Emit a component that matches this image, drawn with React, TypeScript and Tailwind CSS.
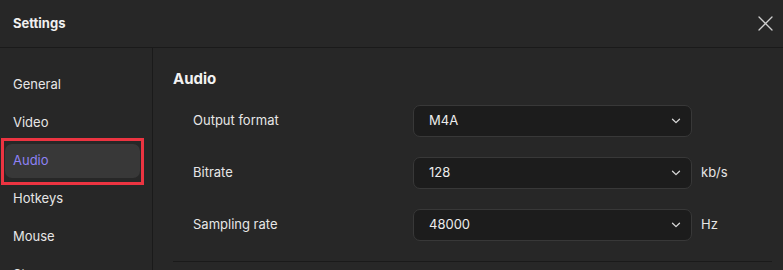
import { useState } from 'react'

const navItems = ['General', 'Video', 'Audio', 'Hotkeys', 'Mouse', 'Storage']

interface SelectRowProps {
  label: string
  value: string
  unit?: string
}

function Chevron() {
  return (
    <svg width="10" height="6" viewBox="0 0 10 6" fill="none">
      <path d="M1.5 1.2 L5 4.6 L8.5 1.2" stroke="#d8d8d8" strokeWidth="1.3" strokeLinecap="round" strokeLinejoin="round" />
    </svg>
  )
}

function SelectRow({ label, value, unit }: SelectRowProps) {
  return (
    <div className="flex items-center h-[32px]">
      <span className="w-[240px] pl-[20px] text-[13px] text-[#e6e6e6]">{label}</span>
      <div className="flex items-center justify-between w-[279px] h-[32px] pl-[15px] pr-[10px] rounded-[7px] bg-[#1c1c1c] border border-[#383838]">
        <span className="text-[13px] text-[#ececec]">{value}</span>
        <Chevron />
      </div>
      {unit && <span className="ml-[9px] text-[13px] text-[#e6e6e6]">{unit}</span>}
    </div>
  )
}

export default function App() {
  const [active, setActive] = useState('Audio')

  return (
    <div className="w-[783px] h-[270px] overflow-hidden bg-[#272727] flex flex-col font-['Inter',sans-serif]">
      {/* header */}
      <div className="h-[48px] shrink-0 flex items-center justify-between pl-[13px] pr-[10px] border-b border-[#1a1a1a]">
        <span className="text-[13px] font-bold text-[#f0f0f0]">Settings</span>
        <svg width="15" height="15" viewBox="0 0 15 15" fill="none">
          <path d="M1 1 L14 14 M14 1 L1 14" stroke="#cfcfcf" strokeWidth="1.3" strokeLinecap="round" />
        </svg>
      </div>

      <div className="flex flex-1 min-h-0">
        {/* sidebar */}
        <div className="w-[153px] shrink-0 border-r border-[#1a1a1a] pt-[20px] flex flex-col gap-[4px]">
          {navItems.map(item => {
            const selected = item === active
            return (
              <div
                key={item}
                onClick={() => setActive(item)}
                className={
                  selected
                    ? 'relative ml-[5px] mr-[12px] h-[34px] shrink-0 flex items-center pl-[8px] rounded-[7px] bg-[#383838] text-[13px] text-[#8e82f5]'
                    : 'relative ml-[5px] mr-[12px] h-[34px] shrink-0 flex items-center pl-[8px] rounded-[7px] text-[13px] text-[#e6e6e6]'
                }
              >
                {item}
                {selected && (
                  <div className="absolute -top-[6px] -left-[4px] -right-[4px] -bottom-[7px] border-[3px] border-[#ec3441] pointer-events-none" />
                )}
              </div>
            )
          })}
        </div>

        {/* content */}
        <div className="flex-1 pl-[20px] pr-[11px] pt-[21px] flex flex-col">
          <h2 className="text-[15px] leading-[20px] font-bold text-[#f2f2f2]">Audio</h2>
          <div className="mt-[16px] flex flex-col gap-[20px]">
            <SelectRow label="Output format" value="M4A" />
            <SelectRow label="Bitrate" value="128" unit="kb/s" />
            <SelectRow label="Sampling rate" value="48000" unit="Hz" />
          </div>
          <div className="mt-[20px] border-t border-[#1a1a1a]" />
        </div>
      </div>
    </div>
  )
}
